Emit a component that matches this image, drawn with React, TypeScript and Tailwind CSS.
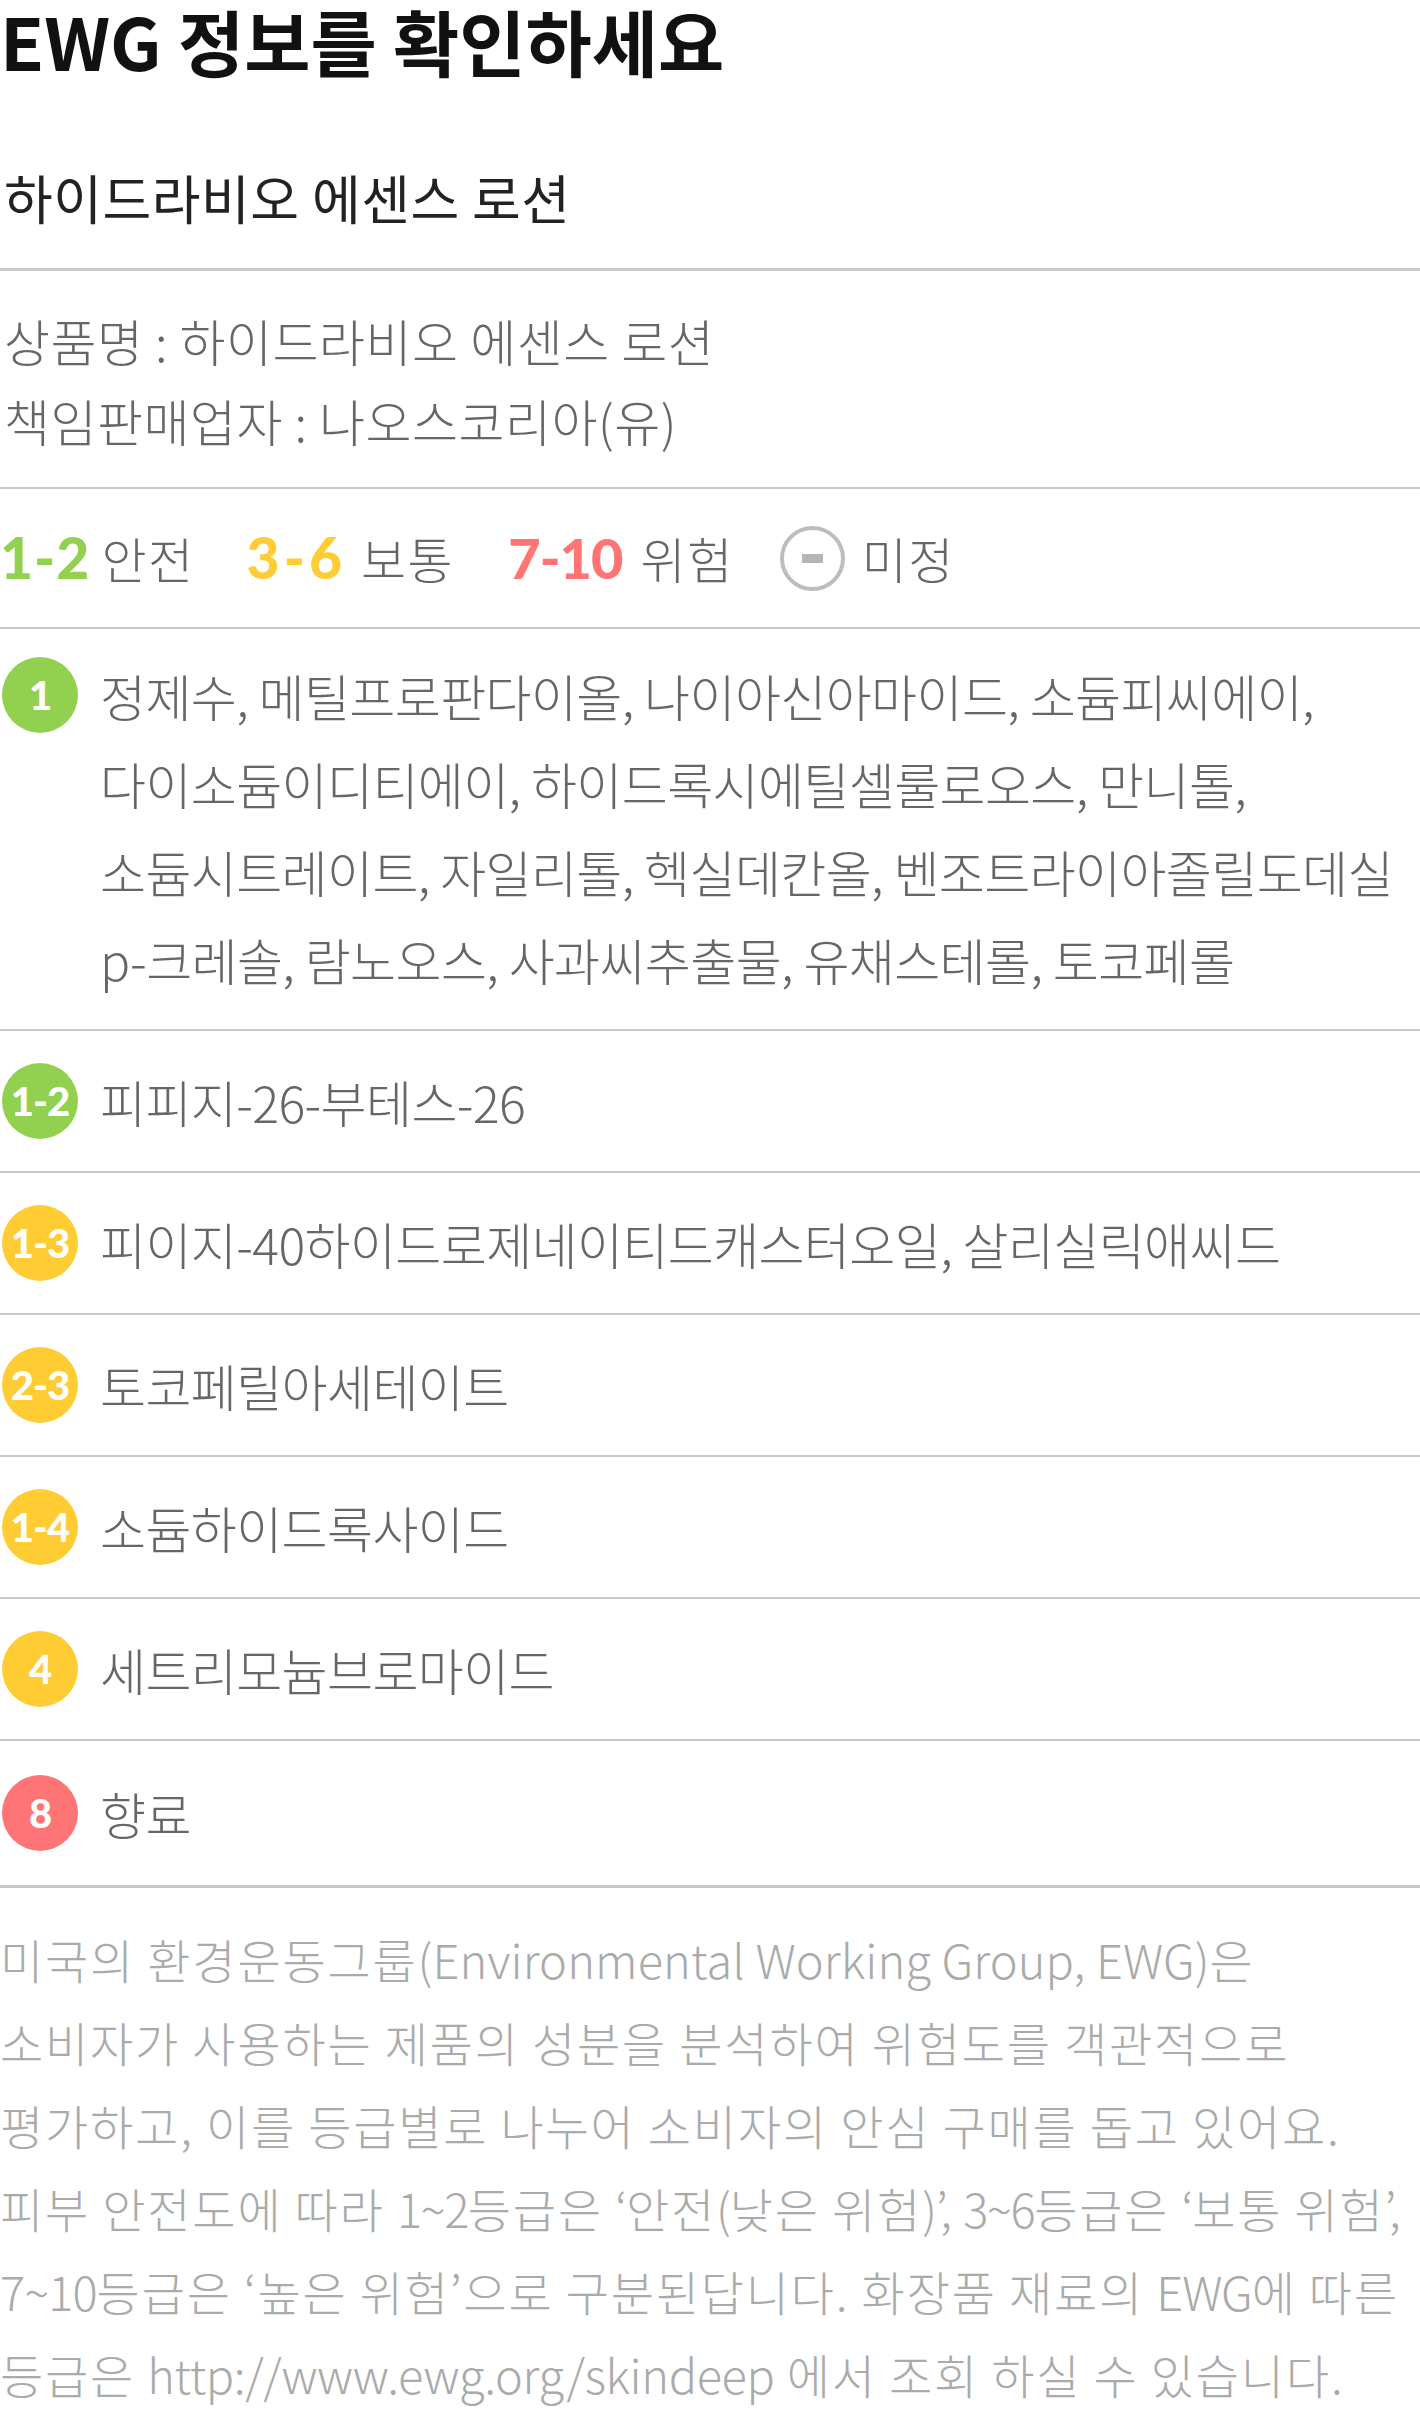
import React from "react";

const KR = "font-['Noto_Sans_CJK_KR','Noto_Sans',sans-serif]";
const NUM = "font-['Lato','Noto_Sans',sans-serif]";

type Row = { label: string; color: string; text: string; tall?: boolean };

const rows: Row[] = [
  { label: "1-2", color: "bg-[#92d050]", text: "피피지-26-부테스-26" },
  { label: "1-3", color: "bg-[#ffcc33]", text: "피이지-40하이드로제네이티드캐스터오일, 살리실릭애씨드" },
  { label: "2-3", color: "bg-[#ffcc33]", text: "토코페릴아세테이트" },
  { label: "1-4", color: "bg-[#ffcc33]", text: "소듐하이드록사이드" },
  { label: "4", color: "bg-[#ffcc33]", text: "세트리모늄브로마이드" },
  { label: "8", color: "bg-[#ff7474]", text: "향료", tall: true },
];

function Badge({ label, color }: { label: string; color: string }) {
  return (
    <div
      className={`${color} ${NUM} ml-[2px] flex h-[76px] w-[76px] shrink-0 items-center justify-center rounded-full text-[40px] font-black tracking-[-1px] text-white leading-none`}
    >
      {label}
    </div>
  );
}

const Divider = ({ thick }: { thick?: boolean }) => (
  <div className={`${thick ? "h-[3px]" : "h-[2px]"} w-full bg-[#c8c8c8]`} />
);

const L = ({ children }: { children: React.ReactNode }) => (
  <span className="tracking-[0.1px]">{children}</span>
);

export default function App() {
  const group1 = [
    "정제수, 메틸프로판다이올, 나이아신아마이드, 소듐피씨에이,",
    "다이소듐이디티에이, 하이드록시에틸셀룰로오스, 만니톨,",
    "소듐시트레이트, 자일리톨, 헥실데칸올, 벤조트라이아졸릴도데실",
    "p-크레솔, 람노오스, 사과씨추출물, 유채스테롤, 토코페롤",
  ];
  const para: React.ReactNode[] = [
    <>
      미국의 환경운동그룹<L>(Environmental Working Group, EWG)</L>은
    </>,
    <>소비자가 사용하는 제품의 성분을 분석하여 위험도를 객관적으로</>,
    <>평가하고, 이를 등급별로 나누어 소비자의 안심 구매를 돕고 있어요.</>,
    <>
      피부 안전도에 따라 <span className="tracking-[-1.5px]">1~2</span>등급은{" "}
      <span className="tracking-[-1px]">‘</span>안전<span className="tracking-[-1px]">(</span>낮은 위험
      <span className="tracking-[-1px]">)’,</span> <span className="tracking-[-1.5px]">3~6</span>등급은{" "}
      <span className="tracking-[-1px]">‘</span>보통 위험<span className="tracking-[-1px]">’,</span>
    </>,
    <>
      <span className="tracking-[-1px]">7~10</span>등급은 ‘높은 위험’으로 구분된답니다. 화장품 재료의{" "}
      <span className="tracking-[-1px]">EWG</span>에 따른
    </>,
    <>
      등급은 <span className="tracking-[-0.4px]">http://www.ewg.org/skindeep</span> 에서 조회 하실 수 있습니다.
    </>,
  ];
  return (
    <div className={`${KR} w-[1420px] bg-white`}>
      <div className="h-[78px] pt-[2px]">
        <h1 className="whitespace-nowrap text-[72px] font-bold leading-[76px] tracking-[0px] text-[#111]">
          EWG 정보를 확인하세요
        </h1>
      </div>
      <div className="h-[190px] pl-[4px] pt-[89px]">
        <div className="whitespace-nowrap text-[53px] leading-[60px] tracking-[0.5px] text-[#222]">
          하이드라비오 에센스 로션
        </div>
      </div>
      <Divider thick />
      <div className="flex h-[216px] flex-col pt-[29px] pl-[4px] text-[50px] font-light leading-[80px] tracking-[0.5px] text-[#666]">
        <div className="whitespace-nowrap">상품명 : 하이드라비오 에센스 로션</div>
        <div className="whitespace-nowrap">책임판매업자 : 나오스코리아(유)</div>
      </div>
      <Divider />
      <div className="flex h-[138px] items-center text-[49px] font-light tracking-[1.5px] text-[#666]">
        <div className="flex items-center gap-[11px]">
          <span className={`${NUM} text-[57px] font-black tracking-[1px] text-[#92d050]`}>1-2</span>
          <span>안전</span>
        </div>
        <div className="ml-[52px] flex items-center gap-[15px]">
          <span className={`${NUM} text-[57px] font-black tracking-[4px] text-[#ffcc33]`}>3-6</span>
          <span>보통</span>
        </div>
        <div className="ml-[54px] flex items-center gap-[18px]">
          <span className={`${NUM} text-[56px] font-black tracking-[-1px] text-[#ff7474]`}>7-10</span>
          <span>위험</span>
        </div>
        <div className="ml-[46px] flex items-center gap-[17px]">
          <span className="flex h-[65px] w-[65px] items-center justify-center rounded-full border-[4px] border-[#bdbdbd]">
            <span className="h-[9px] w-[21px] bg-[#b5b5b5]" />
          </span>
          <span>미정</span>
        </div>
      </div>
      <Divider />
      <div className="flex h-[400px] items-start gap-[22px] pt-[22px]">
        <div className="mt-[6px]">
          <Badge label="1" color="bg-[#92d050]" />
        </div>
        <div className="flex flex-col text-[50px] font-light leading-[88px] tracking-[-0.6px] text-[#666]">
          {group1.map((l) => (
            <div key={l} className="whitespace-nowrap">
              {l}
            </div>
          ))}
        </div>
      </div>
      <Divider />
      {rows.map((r, i) => (
        <React.Fragment key={r.label}>
          <div className={`flex ${r.tall ? "h-[144px]" : "h-[140px]"} items-center gap-[22px]`}>
            <Badge label={r.label} color={r.color} />
            <div className="whitespace-nowrap text-[50px] font-light tracking-[-0.6px] text-[#666]">
              {r.text}
            </div>
          </div>
          <Divider thick={i === rows.length - 1} />
        </React.Fragment>
      ))}
      <div className="flex flex-col pt-[29px] text-[47px] font-light leading-[83px] tracking-[1.8px] text-[#aaa]">
        {para.map((l, i) => (
          <div key={i} className="whitespace-nowrap">
            {l}
          </div>
        ))}
      </div>
    </div>
  );
}
